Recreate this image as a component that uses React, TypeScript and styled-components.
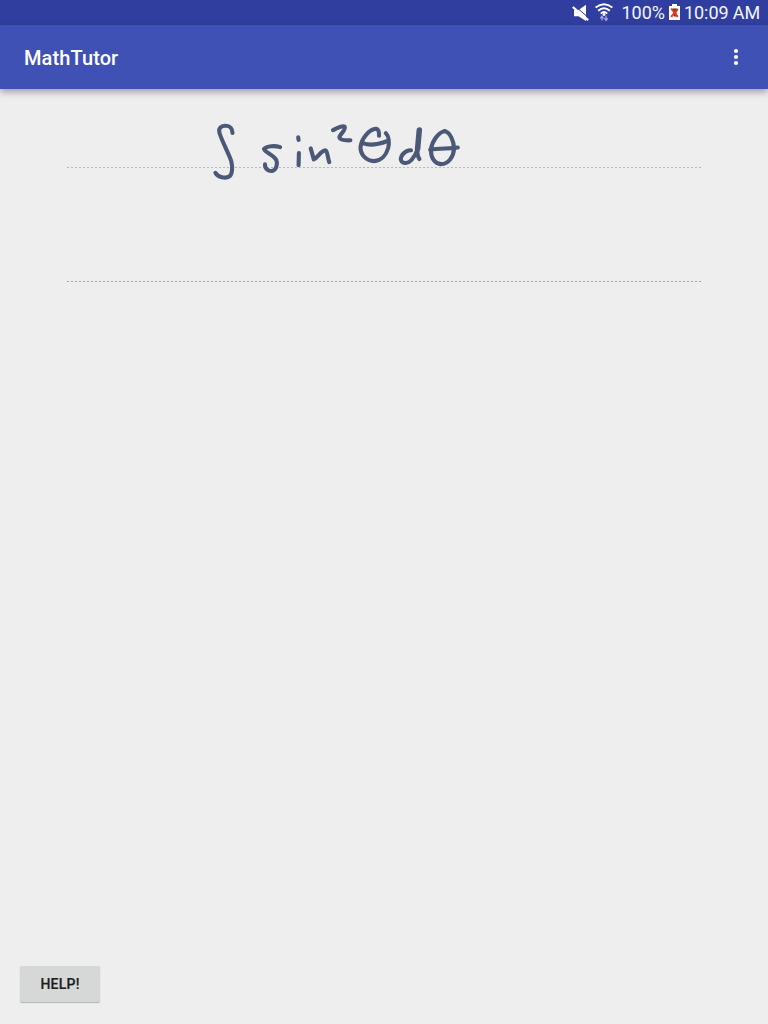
import React from "react";
import styled, { createGlobalStyle } from "styled-components";

const GlobalStyle = createGlobalStyle`
  * { box-sizing: border-box; }
  body { margin: 0; background: #eeeeee; font-family: Roboto, "Liberation Sans", sans-serif; }
`;

const Screen = styled.div`
  width: 768px;
  height: 1024px;
  display: flex;
  flex-direction: column;
  background: #eeeeee;
  overflow: hidden;
`;

const StatusBar = styled.header`
  height: 25px;
  flex: none;
  display: flex;
  align-items: center;
  justify-content: flex-end;
  padding: 0 8.5px 0 0;
  background: #303f9f;
  color: #f4f5fb;
  font-size: 18px;
  line-height: 25px;
  white-space: nowrap;
`;

const StatusIcon = styled.svg<{ $gap: number }>`
  display: block;
  flex: none;
  margin-right: ${(p) => p.$gap}px;
`;

const StatusText = styled.span<{ $width: number; $tracking?: number }>`
  width: ${(p) => p.$width}px;
  text-align: right;
  display: block;
  letter-spacing: ${(p) => p.$tracking ?? 0}px;
`;

const Toolbar = styled.div`
  height: 64px;
  flex: none;
  display: flex;
  align-items: center;
  justify-content: space-between;
  padding: 2px 24px 0 24px;
  background: #3f51b5;
  box-shadow: 0 3px 7px rgba(0, 0, 0, 0.34);
  z-index: 1;
`;

const Title = styled.h1`
  margin: 0;
  color: #fff;
  font-size: 20px;
  line-height: 24px;
  font-weight: 500;
  letter-spacing: 0.1px;
`;

const MenuButton = styled.button`
  border: 0;
  padding: 0;
  margin-bottom: 2px;
  background: none;
  width: 16px;
  height: 24px;
`;

const Sheet = styled.main`
  flex: 1;
  min-height: 0;
`;

const Ink = styled.svg`
  display: block;
`;

const Footer = styled.footer`
  flex: none;
  padding: 0 0 22px 20px;
`;

const HelpButton = styled.button`
  display: block;
  width: 80px;
  height: 36px;
  border: 0;
  border-radius: 2px;
  padding: 0;
  background: #d6d8d7;
  box-shadow: 0 1px 1px rgba(0, 0, 0, 0.2), 0 1px 1px rgba(0, 0, 0, 0.06);
  color: #1d1f1f;
  font-family: inherit;
  font-weight: 500;
  font-size: 14px;
  line-height: 37px;
  letter-spacing: 0.22px;
  -webkit-text-stroke: 0.2px #1d1f1f;
`;

const STROKES = [
  "M232.5 133C232.5 129 230 125.8 226 125.8C221.5 125.5 218.7 128 219.2 131.5C219.5 136.5 229 153.5 231.2 161C233 167.5 232 174.5 229.6 176.3C225.5 179 217.8 177.3 215.4 172.8",
  "M280.1 147.1C275.5 145.6 266.5 145.6 264 149C265 152.5 273 154.5 276.3 160C277.8 163.5 276.5 169.5 272.8 170.7C268.5 171.9 264.8 168.8 265 164.4",
  "M298.2 137.4L298.6 140",
  "M298.9 153L298.6 165.2",
  "M310.7 148.4L313.8 159.4C317.8 157.6 321 150.6 325.2 150.4C327.7 150.6 327.2 156.5 329.3 162.2",
  "M333 130.2C336.4 128.6 341.8 125.2 344.6 126.6C346.6 129.8 339.3 134.7 339.4 137.5C340.2 140.3 346 140.5 350.4 140.3",
  "M379 135.8C379.2 132.5 379 129.2 376 128.8C369.5 129.3 361.8 137.7 360.5 147C360.2 154.6 366.5 161 374 161.1C381.6 161 386.3 154.5 388.2 148C389.6 142.2 388.7 136 385.8 133.1",
  "M363.5 143.4C370 146 379.8 143.9 387.6 141",
  "M411 150.3C405.5 149.8 399.7 156 401.1 160.5C402.9 164.4 408.4 163.5 411.5 160C414.9 156 416.5 152.5 417.6 149C417 154 418 157 419.4 159",
  "M445.5 131.3C439 131.2 431.8 141.5 431 149.5C430.7 158 434.8 163.8 441 164.1C448.3 164.1 453.6 156.8 454 148.8C454 141.5 450.1 131.4 444 131.3",
  "M430.2 149.8C439 147.9 450 149.2 457.8 147.6",
];

export default function App() {
  return (
    <>
      <GlobalStyle />
      <Screen>
        <StatusBar>
          <StatusIcon $gap={6} width="17" height="18" viewBox="0 0 17 18" aria-label="Muted">
            <path d="M2 6H6.5L14 0.8V17L6.5 12.2H2Z" fill="#fff" />
            <path d="M3 2L17 14.2" stroke="#303f9f" strokeWidth="1" />
            <path d="M0.8 3L16.2 16.2" stroke="#fff" strokeWidth="2.2" />
          </StatusIcon>
          <StatusIcon $gap={8} width="18" height="19" viewBox="0 0 18 19" aria-label="Wi-Fi">
            <g fill="none" stroke="#fff" strokeWidth="1.9">
              <path d="M0.6 4.6Q9 -2.3 17.4 4.6" />
              <path d="M3.2 7.7Q9 2.6 14.8 7.7" />
              <path d="M5.8 10.6Q9 7.5 12.2 10.6" />
            </g>
            <circle cx="9" cy="11.5" r="1.4" fill="#fff" />
            <path d="M7 17.6V13.2M5.2 15.4L7 13.2L8.4 15.4M11 12.6V17.4M9.4 15.2L11 17.4L12.8 15.2" fill="none" stroke="#a2aadc" strokeWidth="1.2" />
          </StatusIcon>
          <StatusText $width={44}>100%</StatusText>
          <StatusIcon $gap={0} width="19" height="17" viewBox="0 0 19 17" aria-label="Battery">
            <path d="M4 2H7V0H12V2H15V16H4Z" fill="#fff" />
            <path d="M7.5 4.5H12V7H7.5ZM9 7H11.5V12.5H9Z" fill="#54403f" />
            <path d="M6.2 4.5L12.8 12.8M12.8 5L6.2 12.8" stroke="#e63b16" strokeWidth="2" />
          </StatusIcon>
          <StatusText $width={75.5} $tracking={-0.07}>10:09 AM</StatusText>
        </StatusBar>
        <Toolbar>
          <Title>MathTutor</Title>
          <MenuButton aria-label="More options">
            <svg width="16" height="24" viewBox="0 0 16 24" fill="#fff">
              <circle cx="8" cy="6" r="2.1" />
              <circle cx="8" cy="12" r="2.1" />
              <circle cx="8" cy="18" r="2.1" />
            </svg>
          </MenuButton>
        </Toolbar>
        <Sheet>
          <Ink width="768" height="240" viewBox="0 89 768 240" fill="none">
            <path d="M67 167.5H701" stroke="#b7b7b7" strokeDasharray="2 2" />
            <path d="M67 281.5H701" stroke="#a2a2a2" strokeDasharray="2 2" />
            <g stroke="#4b5878" strokeWidth="4.1" strokeLinecap="round" strokeLinejoin="round">
              {STROKES.map((d) => (
                <path key={d} d={d} />
              ))}
              <path d="M419.3 130L417.6 149" strokeWidth="5.5" />
            </g>
          </Ink>
        </Sheet>
        <Footer>
          <HelpButton>HELP!</HelpButton>
        </Footer>
      </Screen>
    </>
  );
}
